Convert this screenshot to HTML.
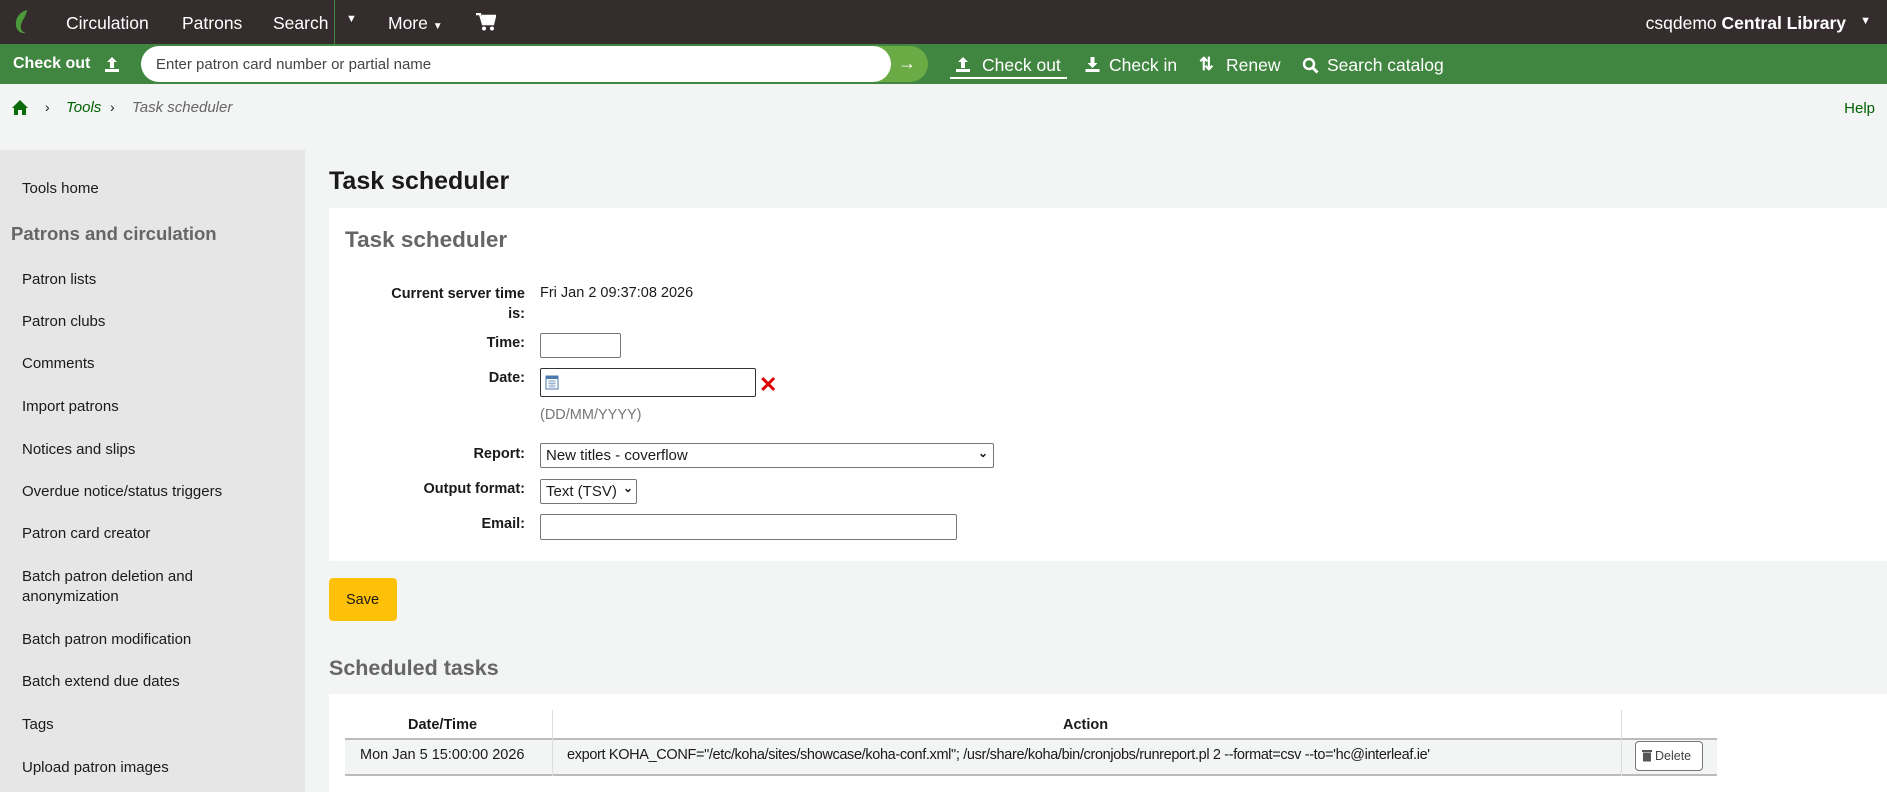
<!DOCTYPE html>
<html><head><meta charset="utf-8"><style>
*{box-sizing:border-box;margin:0;padding:0}
body{width:1887px;height:792px;overflow:hidden;background:#f3f4f4;font-family:"Liberation Sans",sans-serif;font-size:15px;color:#1a1a1a;position:relative}
.a{position:absolute;white-space:nowrap}
#nav{position:absolute;left:0;top:0;width:1887px;height:44px;background:#352c2d;color:#fff;font-size:17.5px}
#gb{position:absolute;left:0;top:44px;width:1887px;height:40px;background:#408540;color:#fff;font-size:17.5px}
#side{position:absolute;left:0;top:150px;width:305px;height:642px;background:#e6e6e6}
#side .a{left:22px;font-size:15px;color:#1a1a1a}
.lab{position:absolute;right:1362px;font-weight:bold;font-size:14.5px;text-align:right;white-space:nowrap}
.inp{position:absolute;background:#fff;border:1px solid #767676;border-radius:2px}
</style></head><body>
<div id="nav">
 <svg class="a" style="left:14px;top:9px" width="18" height="26" viewBox="0 0 18 26"><path d="M13 1C5 3 1 10 2 17c1 5 5 8 10 7-4-1-6-4-5-8 1-5 5-8 6-15z" fill="#4b9a3a"/></svg>
 <span class="a" style="left:66px;top:13px">Circulation</span>
 <span class="a" style="left:182px;top:13px">Patrons</span>
 <span class="a" style="left:273px;top:13px">Search</span>
 <div class="a" style="left:334px;top:0;width:1px;height:44px;background:#408540"></div>
 <span class="a" style="left:346px;top:13px;font-size:11px">▼</span>
 <span class="a" style="left:388px;top:13px">More <span style="font-size:10px">▼</span></span>
 <svg class="a" style="left:476px;top:13px" width="20" height="18" viewBox="0 0 20 18"><path d="M0 1h4l3 10h10l2-8H6" stroke="#fff" stroke-width="2.4" fill="none"/><path d="M6 4h12l-2 7H8z" fill="#fff"/><circle cx="8" cy="15.5" r="2" fill="#fff"/><circle cx="16" cy="15.5" r="2" fill="#fff"/></svg>
 <span class="a" style="right:41px;top:13px">csqdemo <b>Central Library</b></span>
 <span class="a" style="right:16px;top:15px;font-size:11px">▼</span>
</div>
<div id="gb">
 <span class="a" style="left:13px;top:11px;font-weight:bold;font-size:16px">Check out</span>
 <svg class="a" style="left:104px;top:12px" width="16" height="17" viewBox="0 0 16 17"><path d="M8 1 3 6h3v6h4V6h3z" fill="#fff"/><rect x="1" y="13" width="14" height="3" fill="#fff"/></svg>
 <div class="a" style="left:870px;top:2px;width:58px;height:36px;background:#6aab45;border-radius:0 18px 18px 0"></div>
 <div class="a" style="left:141px;top:2px;width:750px;height:36px;background:#fff;border-radius:18px"></div>
 <span class="a" style="left:156px;top:12px;font-size:15px;color:#444">Enter patron card number or partial name</span>
 <span class="a" style="left:898px;top:9px;font-size:18px;font-weight:bold">→</span>
 <svg class="a" style="left:955px;top:12px" width="16" height="17" viewBox="0 0 16 17"><path d="M8 1 3 6h3v6h4V6h3z" fill="#fff"/><rect x="1" y="13" width="14" height="3" fill="#fff"/></svg>
 <span class="a" style="left:982px;top:11px">Check out</span>
 <div class="a" style="left:950px;top:33px;width:117px;height:2px;background:#fff"></div>
 <svg class="a" style="left:1084px;top:12px" width="17" height="17" viewBox="0 0 16 17"><path d="M8 12 3 7h3V1h4v6h3z" fill="#fff"/><rect x="1" y="13" width="14" height="3" fill="#fff"/></svg>
 <span class="a" style="left:1109px;top:11px">Check in</span>
 <span class="a" style="left:1199px;top:10px;font-weight:bold">⇅</span>
 <span class="a" style="left:1226px;top:11px">Renew</span>
 <svg class="a" style="left:1302px;top:13px" width="17" height="17" viewBox="0 0 17 17"><circle cx="7" cy="7" r="5" stroke="#fff" stroke-width="2.5" fill="none"/><path d="M10.5 10.5 15.5 15.5" stroke="#fff" stroke-width="3"/></svg>
 <span class="a" style="left:1327px;top:11px">Search catalog</span>
</div>
<svg class="a" style="left:12px;top:100px" width="16" height="15" viewBox="0 0 16 15"><path d="M8 0 0 8h2v7h4v-5h4v5h4V8h2z" fill="#0b6b0b"/></svg>
<span class="a" style="left:45px;top:99px;font-size:14px">›</span>
<span class="a" style="left:66px;top:99px;font-style:italic;color:#006100;font-size:15px">Tools</span>
<span class="a" style="left:110px;top:99px;font-size:14px">›</span>
<span class="a" style="left:132px;top:99px;font-style:italic;color:#666;font-size:15px">Task scheduler</span>
<span class="a" style="right:12px;top:100px;color:#006100;font-size:15px">Help</span>
<div id="side">
 <span class="a" style="top:30px">Tools home</span>
 <span class="a" style="left:11px!important;top:73px;font-weight:bold;font-size:18.5px!important;color:#666!important">Patrons and circulation</span>
 <span class="a" style="top:121px">Patron lists</span>
 <span class="a" style="top:163px">Patron clubs</span>
 <span class="a" style="top:205px">Comments</span>
 <span class="a" style="top:248px">Import patrons</span>
 <span class="a" style="top:291px">Notices and slips</span>
 <span class="a" style="top:333px">Overdue notice/status triggers</span>
 <span class="a" style="top:375px">Patron card creator</span>
 <span class="a" style="top:418px">Batch patron deletion and</span>
 <span class="a" style="top:438px">anonymization</span>
 <span class="a" style="top:481px">Batch patron modification</span>
 <span class="a" style="top:523px">Batch extend due dates</span>
 <span class="a" style="top:566px">Tags</span>
 <span class="a" style="top:609px">Upload patron images</span>
</div>
<span class="a" style="left:329px;top:167px;font-size:25px;font-weight:bold;color:#1a1a1a">Task scheduler</span>
<div class="a" style="left:329px;top:208px;width:1558px;height:353px;background:#fff"></div>
<span class="a" style="left:345px;top:227px;font-size:22.5px;font-weight:bold;color:#666">Task scheduler</span>
<div class="lab" style="top:284px;line-height:20px">Current server time<br>is:</div>
<span class="a" style="left:540px;top:285px;font-size:14.5px">Fri Jan 2 09:37:08 2026</span>
<div class="lab" style="top:335px">Time:</div>
<div class="inp" style="left:540px;top:333px;width:81px;height:25px"></div>
<div class="lab" style="top:370px">Date:</div>
<div class="inp" style="left:540px;top:368px;width:216px;height:29px;border-color:#333"></div>
<svg class="a" style="left:545px;top:374px" width="14" height="16" viewBox="0 0 14 16"><rect x="1" y="2" width="12" height="13" fill="#fff" stroke="#4a7ab0"/><rect x="1" y="2" width="12" height="3" fill="#4a7ab0"/><path d="M3 7h8M3 9.5h8M3 12h8M5 6v8M7 6v8M9 6v8" stroke="#8aa8cc" stroke-width=".7"/></svg>
<span class="a" style="left:759px;top:372px;color:#d00;font-size:22px;font-weight:bold">✕</span>
<span class="a" style="left:540px;top:407px;color:#777;font-size:14.5px">(DD/MM/YYYY)</span>
<div class="lab" style="top:446px">Report:</div>
<div class="inp" style="left:540px;top:443px;width:454px;height:25px"></div>
<span class="a" style="left:546px;top:447px;font-size:15px">New titles - coverflow</span>
<span class="a" style="left:978px;top:446px;font-size:12px;font-weight:bold">⌄</span>
<div class="lab" style="top:481px">Output format:</div>
<div class="inp" style="left:540px;top:479px;width:97px;height:25px"></div>
<span class="a" style="left:546px;top:483px;font-size:15px">Text (TSV)</span>
<span class="a" style="left:623px;top:481px;font-size:12px;font-weight:bold">⌄</span>
<div class="lab" style="top:516px">Email:</div>
<div class="inp" style="left:540px;top:514px;width:417px;height:26px"></div>
<div class="a" style="left:329px;top:578px;width:68px;height:43px;background:#ffc107;border-radius:4px"></div>
<span class="a" style="left:346px;top:592px;font-size:14.5px">Save</span>
<span class="a" style="left:329px;top:656px;font-size:21.5px;font-weight:bold;color:#666">Scheduled tasks</span>
<div class="a" style="left:329px;top:694px;width:1558px;height:98px;background:#fff"></div>
<div class="a" style="left:345px;top:738px;width:1372px;height:38px;background:#f3f4f4;border-top:2px solid #bbb;border-bottom:2px solid #bbb"></div>
<div class="a" style="left:552px;top:710px;width:1px;height:66px;background:#ddd"></div>
<div class="a" style="left:1621px;top:710px;width:1px;height:66px;background:#ddd"></div>
<span class="a" style="left:408px;top:717px;font-weight:bold;font-size:14.5px">Date/Time</span>
<span class="a" style="left:1063px;top:717px;font-weight:bold;font-size:14.5px">Action</span>
<span class="a" style="left:360px;top:747px;font-size:14.5px">Mon Jan 5 15:00:00 2026</span>
<span class="a" style="left:567px;top:747px;font-size:14.5px;letter-spacing:-.35px">export KOHA_CONF="/etc/koha/sites/showcase/koha-conf.xml"; /usr/share/koha/bin/cronjobs/runreport.pl 2 --format=csv --to='hc@interleaf.ie'</span>
<div class="a" style="left:1635px;top:741px;width:68px;height:30px;background:#fff;border:1px solid #777;border-radius:4px"></div>
<svg class="a" style="left:1642px;top:749px" width="10" height="13" viewBox="0 0 10 13"><rect x="0" y="1" width="10" height="2" fill="#555"/><rect x="1" y="3.5" width="8" height="9" fill="#555"/></svg>
<span class="a" style="left:1655px;top:749px;font-size:12.5px;color:#444">Delete</span>
</body></html>
